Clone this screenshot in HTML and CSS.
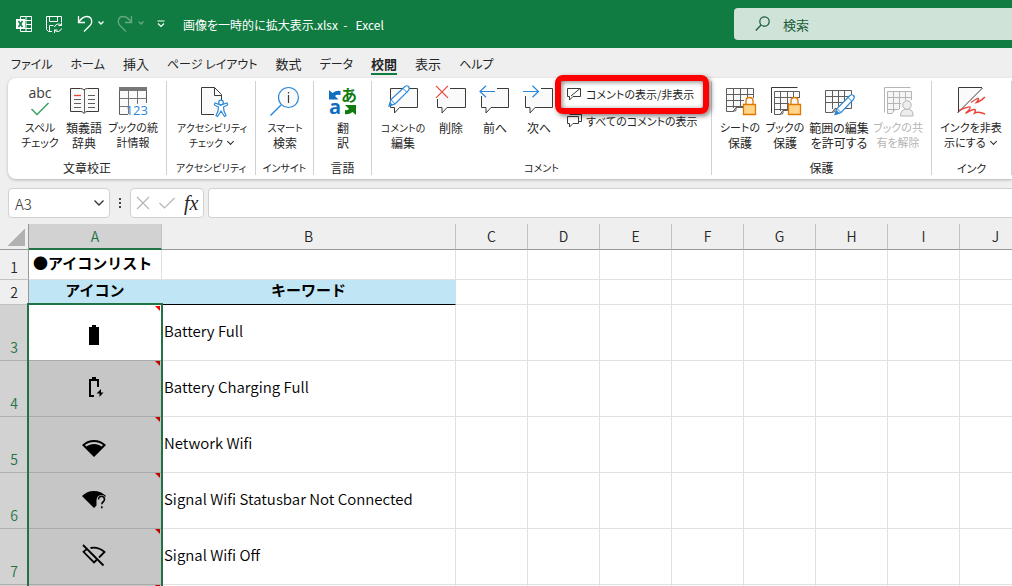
FILE: index.html
```html
<!DOCTYPE html>
<html lang="ja">
<head>
<meta charset="utf-8">
<title>画像を一時的に拡大表示.xlsx - Excel</title>
<link rel="stylesheet" href="styles.css">
</head>
<body>
<div class="app">
<header class="titlebar">
  <div class="quick">
    <svg class="q-logo" width="16" height="16" viewBox="0 0 16 16" fill="none" stroke="#fff"><path d="M4.500 3V.5h11v15h-11V13M10 .5v15M5 4.500h10M10 8.500h5M5 12.500h10"/><path d="M0 3h9v10H0z" fill="#fff" stroke="none"/><path d="M2.500 5l4 6M6.500 5l-4 6" stroke="#107c41" stroke-width="1.500"/></svg>
    <button class="q-btn" aria-label="保存"><svg width="17" height="17" viewBox="0 0 17 17" fill="none" stroke="#fff"><path d="M15.500 6V.5H.5v13l2 2H6M3.500 .5v5h8v-5M3.500 15V9.500h4"/><path d="M8.500 11a4 4 0 0 1 7-1.500M15.500 6.500v3h-3M15.500 12.500a4 4 0 0 1-7 1.500M8.500 17v-3h3"/></svg></button>
    <button class="q-btn q-wide" aria-label="元に戻す"><svg width="28" height="18" viewBox="0 0 28 18" fill="none" stroke="#fff" stroke-width="1.300"><path d="M1.500 1v6.500H8M1.500 7.500C4 3.500 7 1.500 10 1.500c5 0 6 6 3 9L7 16.500"/><path d="M21.500 6.500l2.500 2.500 2.500-2.500"/></svg></button>
    <button class="q-btn q-wide q-off" aria-label="やり直し"><svg width="28" height="18" viewBox="0 0 28 18" fill="none" stroke="#fff" stroke-width="1.300"><path d="M14.500 1v6.500H8M14.500 7.500C12 3.500 9 1.500 6 1.500c-5 0-6 6-3 9l6 6"/><path d="M21.500 6.500l2.500 2.500 2.500-2.500"/></svg></button>
    <button class="q-btn" aria-label="クイック アクセス ツール バーのユーザー設定"><svg width="8" height="8" viewBox="0 0 8 8" fill="none" stroke="#fff" stroke-width="1.200"><path d="M.5 1h7M1 3.500l3 3 3-3"/></svg></button>
  </div>
  <h1 class="doc">画像を一時的に拡大表示.xlsx &nbsp;-&nbsp;&nbsp; Excel</h1>
  <label class="search"><svg width="16" height="16" viewBox="0 0 16 16" fill="none" stroke="#185c37" stroke-width="1.200"><circle cx="9.500" cy="5.500" r="4.700"/><path d="M6 9L.8 14.500"/></svg><input type="search" placeholder="検索" aria-label="検索"></label>
</header>

<nav class="tabs">
  <a href="#file" class="kana">ファイル</a><a href="#home" class="kana">ホーム</a><a href="#insert">挿入</a><a href="#layout" class="kana">ページ レイアウト</a><a href="#formulas">数式</a><a href="#data" class="kana">データ</a><a href="#review" class="active">校閲</a><a href="#view">表示</a><a href="#help" class="kana">ヘルプ</a>
</nav>

<div class="ribbon">
  <section class="group g-proof">
    <div class="tools">
      <button class="tool w36 kana"><svg width="32" height="32" viewBox="0 0 32 32"><text x="16" y="13" text-anchor="middle" class="abc">abc</text><path d="M7.500 24l5.500 5.500L24.500 18" fill="none" stroke="#35a164" stroke-width="1.500"/></svg><span>スペル<br>チェック</span></button>
      <button class="tool w44"><svg width="32" height="32" viewBox="0 0 32 32" fill="#fafafa" stroke="#3b3a39"><path d="M2.500 3.500h10q2.500 0 3.500 1.500 1-1.500 3.500-1.500h11v23H19q-2 0-3 2-1-2-3-2H2.500z"/><path d="M16.500 5v22M6 14.500h7M6 18.500h7M6 22.500h7M20 10.500h7M20 14.500h7M20 18.500h7M20 22.500h7" stroke="#605e5c"/><path d="M6 10.500h7" stroke="#e8443a" stroke-width="1.300"/></svg><span>類義語<br>辞典</span></button>
      <button class="tool w46 kana"><svg width="32" height="32" viewBox="0 0 32 32" fill="none" stroke="#605e5c"><path d="M2.500 3h27v17h-17v10h-10z" fill="#fafafa" stroke="none"/><path d="M11.500 6v23M20.500 6v13M3 13.500h26M3 21.500h9" stroke="#797775"/><path d="M29.500 18V2.500h-27v27H11"/><path d="M2 2h28v4H2z" fill="#797775" stroke="none"/><text x="31" y="30" text-anchor="end" class="n123">123</text></svg><span>ブックの統<br>計情報</span></button>
    </div>
    <h2>文章校正</h2>
  </section>
  <section class="group g-access">
    <div class="tools">
      <button class="tool w76 tight"><svg width="32" height="32" viewBox="0 0 32 32" fill="none" stroke="#3b3a39"><path d="M18 29.500H5.500v-27h13l7 7V15" fill="#fafafa"/><path d="M18.500 2.500v8h7"/><g stroke="#2b88d8" fill="#fff" stroke-width="1.200"><path d="M24.500 20l-5.500-2q-1.500 2 .5 2.500l3 1.500-.5 4-2 4.500 1.500 1 3.500-5.500 3.500 5.500 1.500-1-2-4.500-.5-4 3-1.500q2-.5.5-2.500z"/><circle cx="25" cy="17.500" r="2.300"/></g></svg><span>アクセシビリティ<br>チェック <i class="chev"></i></span></button>
    </div>
    <h2 class="tight">アクセシビリティ</h2>
  </section>
  <section class="group g-small">
    <div class="tools">
      <button class="tool w44 tight"><svg width="32" height="32" viewBox="0 0 32 32" fill="none"><path d="M1.500 30.500L12 20" stroke="#2b88d8" stroke-width="1.500"/><circle cx="19.500" cy="12.500" r="10" fill="#fafafa" stroke="#2b88d8" stroke-width="1.200"/><path d="M19.500 10v8M19.500 7v1.500" stroke="#3b3a39" stroke-width="1.200"/></svg><span>スマート<br><b>検索</b></span></button>
    </div>
    <h2 class="tight">インサイト</h2>
  </section>
  <section class="group g-small">
    <div class="tools">
      <button class="tool w44"><svg width="32" height="32" viewBox="0 0 32 32"><text x="2" y="29" class="tr-a">a</text><text x="14" y="16" class="tr-ja">あ</text><path d="M2 5l3.500 3q4-3 8-2v4q-4-1-5.500 1l3.500 3.500H2z" fill="#106ebe"/><path d="M18 20h11v10l-3.500-3q-4 3-7.500 2v-4q3 .5 4-1z" fill="#107c10"/></svg><span>翻<br>訳</span></button>
    </div>
    <h2>言語</h2>
  </section>
  <section class="group g-comment">
    <div class="tools">
      <button class="tool w48 tight"><svg width="32" height="32" viewBox="0 0 32 32" fill="none" stroke="#3b3a39"><path d="M3.500 3.500h27v19h-18L7.500 28v-5.500h-4z" fill="#fafafa"/><path d="M2 21l2-6.500L18 1.500q2-1.500 3.500 0t0 4L8 19z" fill="#fff" stroke="#2b88d8" stroke-width="1.200"/><path d="M4 14.500L8 19M16 3.500l4 4" stroke="#2b88d8"/><path d="M2 21l1-4 3 3z" fill="#2b88d8" stroke="none"/></svg><span>コメントの<br><b>編集</b></span></button>
      <button class="tool w40"><svg width="32" height="32" viewBox="0 0 32 32" fill="none" stroke="#3b3a39"><path d="M15 3.500h15.500v19H12L7 28v-5.500H2.500V14" fill="#fafafa"/><path d="M1 .8l12 12M13 .8l-12 12" stroke="#e8443a" stroke-width="1.200"/></svg><span>削除</span></button>
      <button class="tool w40"><svg width="32" height="32" viewBox="0 0 32 32" fill="none" stroke="#3b3a39"><path d="M18 3.500h11.500v19H12L7 28v-5.500H2.500V11" fill="#fafafa"/><path d="M16 6.500H1M7 .8L1 6.500l6 5.700" stroke="#2b88d8" stroke-width="1.200"/></svg><span>前へ</span></button>
      <button class="tool w40"><svg width="32" height="32" viewBox="0 0 32 32" fill="none" stroke="#3b3a39"><path d="M18 3.500h11.500v19H12L7 28v-5.500H2.500V11" fill="#fafafa"/><path d="M0 6.500h15.500M9.500 .8l6 5.700-6 5.700" stroke="#2b88d8" stroke-width="1.200"/></svg><span>次へ</span></button>
      <div class="rows">
        <button class="row marked"><svg width="15" height="14" viewBox="0 0 15 14" fill="none" stroke="#3b3a39"><path d="M.5 1.500h13v8H6L2.500 13V9.500h-2zM4 9l9-7.500"/></svg><span>コメントの表示/非表示</span></button>
        <button class="row"><svg width="15" height="14" viewBox="0 0 15 14" fill="none" stroke="#3b3a39"><path d="M2.500 .5h12v7M.5 2.500h11v7H6L2.500 13V9.500h-2zM14.500 7.500h-3"/></svg><span>すべてのコメントの表示</span></button>
      </div>
    </div>
    <h2 class="tight">コメント</h2>
  </section>
  <section class="group g-protect">
    <div class="tools">
      <button class="tool w42 kana"><svg width="32" height="32" viewBox="0 0 32 32" fill="none" stroke="#605e5c"><path d="M19 22.500h-7l-3 4H2.500v-23h27V13" fill="#fafafa"/><path d="M9.500 4v19M16.500 4v18M23.500 4v8M3 9.500h26M3 15.500h17M3 21.500h16M12 22.500v3l-3 1"/><path d="M22 20v-4q0-3.500 3.500-3.500T29 16v4" stroke="#e07800" stroke-width="1.300"/><path d="M19.500 19.500h12v10h-12z" fill="#ffd58a" stroke="#e07800" stroke-width="1.300"/></svg><span>シートの<br><b>保護</b></span></button>
      <button class="tool w40 kana"><svg width="32" height="32" viewBox="0 0 32 32" fill="none" stroke="#605e5c"><path d="M2.500 28V2.500h26" stroke="#3b3a39"/><path d="M19 25.500h-5l-3 4H5.500v-23h25V13" fill="#fafafa"/><path d="M11.500 6v20M18.500 6v18M24.500 6v7M6 12.500h24M6 18.500h14M6 24.500h13M14 25.500v3l-3 1"/><path d="M22 20v-4q0-3.500 3.500-3.500T29 16v4" stroke="#e07800" stroke-width="1.300"/><path d="M19.500 19.500h12v10h-12z" fill="#ffd58a" stroke="#e07800" stroke-width="1.300"/></svg><span>ブックの<br><b>保護</b></span></button>
      <button class="tool w60"><svg width="32" height="32" viewBox="0 0 32 32" fill="none" stroke="#605e5c"><path d="M2.500 5.500h26v18H12l-3 4H2.500z" fill="#fafafa"/><path d="M9.500 6v18M15.500 6v17M21.500 6v17M3 11.500h25M3 17.500h25M12 23.500v3l-3 1"/><path d="M12 29.500l2-6L27 10.500q2-1.500 3.500 0t0 4L18 27.500z" fill="#fff" stroke="#2b88d8" stroke-width="1.200"/><path d="M14 23.500l4 4M25 12.500l4 4" stroke="#2b88d8"/><path d="M12 30l1.500-5 3.500 3.500z" fill="#2b88d8" stroke="none"/></svg><span>範囲の編集<br>を許可する</span></button>
      <button class="tool w50 kana" disabled><svg width="32" height="32" viewBox="0 0 32 32" fill="none" stroke="#b5b5b5"><path d="M2.500 27.500v-25h26"/><path d="M17 24.500h-4l-3 4H5.500v-22h24V15" fill="#f5f5f5"/><path d="M11.500 6v20M17.500 6v18M23.500 6v9M6 12.500h23M6 18.500h13M6 24.500h11"/><g fill="#eee"><path d="M18.500 31q0-7 6.500-7t6 7z"/><circle cx="25" cy="20" r="4.200"/></g></svg><span>ブックの共<br>有を解除</span></button>
    </div>
    <h2>保護</h2>
  </section>
  <section class="group g-ink">
    <div class="tools">
      <button class="tool w64 kana"><svg width="32" height="32" viewBox="0 0 32 32" fill="none"><path d="M3.500 2.500h24l-24 24z" fill="#fafafa" stroke="none"/><path d="M3.500 27V2.500H27M2.500 28L27.500 3" stroke="#3b3a39"/><path d="M16 17.500q7-5 7.500-4t-2 4q4-1 8.500-5.500M4 25.500q10-4.500 11-3.500t-4.500 6.500q6-4 8.500-4t.5 3.500q4-2 10.500 1" stroke="#e8443a" stroke-width="1.400"/></svg><span>インクを非表<br>示にする <i class="chev"></i></span></button>
    </div>
    <h2 class="kana">インク</h2>
  </section>
</div>

<div class="formula">
  <label class="namebox"><input value="A3" aria-label="名前ボックス"><svg width="12" height="8" viewBox="0 0 12 8" fill="none" stroke="#333" stroke-width="1.300"><path d="M1.500 1.500L6 6l4.500-4.500"/></svg></label>
  <i class="dots"></i>
  <div class="fx">
    <button aria-label="キャンセル"><svg width="14" height="14" viewBox="0 0 14 14" fill="none" stroke="#b5b5b5" stroke-width="1.200"><path d="M1 1l12 12M13 1L1 13"/></svg></button>
    <button aria-label="入力"><svg width="16" height="14" viewBox="0 0 16 14" fill="none" stroke="#b5b5b5" stroke-width="1.200"><path d="M.5 7l5 5L15.500 2"/></svg></button>
    <button class="fn">fx</button>
  </div>
  <input class="entry" aria-label="数式バー">
</div>

<main class="sheet">
<table>
  <colgroup><col class="c-head"><col class="c-a"><col class="c-b"><col class="c-n" span="8"></colgroup>
  <thead><tr><th class="corner"></th><th class="on">A</th><th>B</th><th>C</th><th>D</th><th>E</th><th>F</th><th>G</th><th>H</th><th>I</th><th>J</th></tr></thead>
  <tbody>
    <tr class="r1"><th>1</th><td class="title">●アイコンリスト</td><td></td><td></td><td></td><td></td><td></td><td></td><td></td><td></td><td></td></tr>
    <tr class="r2"><th>2</th><td class="blue">アイコン</td><td class="blue line">キーワード</td><td></td><td></td><td></td><td></td><td></td><td></td><td></td><td></td></tr>
    <tr class="item"><th>3</th><td class="pic first"><div class="range"></div><svg class="icon" viewBox="0 0 24 24"><path d="M17 4h-3V2h-4v2H7v18h10z"/></svg></td><td>Battery Full</td><td></td><td></td><td></td><td></td><td></td><td></td><td></td><td></td></tr>
    <tr class="item"><th>4</th><td class="pic"><svg class="icon" viewBox="0 0 24 24"><path d="M7 4h3V2h4v2h3v8h-2V6H9v14h3v2H7zM19 14l-4.500 4.500h3v3.500l4-4.500h-2.500z"/></svg></td><td>Battery Charging Full</td><td></td><td></td><td></td><td></td><td></td><td></td><td></td><td></td></tr>
    <tr class="item"><th>5</th><td class="pic low"><svg class="icon" viewBox="0 0 24 24"><path fill-rule="evenodd" d="M12 4C7.310 4 3.070 5.900 0 8.980L12 21 24 8.980C20.930 5.900 16.690 4 12 4zM2.920 9.070C5.510 7.080 8.670 6 12 6s6.490 1.080 9.080 3.070l-1.430 1.430C17.500 8.940 14.860 8 12 8s-5.500.94-7.650 2.510z"/></svg></td><td>Network Wifi</td><td></td><td></td><td></td><td></td><td></td><td></td><td></td><td></td></tr>
    <tr class="item"><th>6</th><td class="pic"><svg class="icon" viewBox="0 0 24 24"><path d="M24 8.980C20.930 5.900 16.690 4 12 4S3.070 5.900 0 8.980L12 21l2.500-2.500V13q.5-5 5.500-5 2 0 3 2z"/><path d="M16.500 12.500a3 3 0 1 1 5 2q-1.700 1.300-1.700 2.800M19.800 19.300v2" fill="none" stroke="#000" stroke-width="1.600"/></svg></td><td>Signal Wifi Statusbar Not Connected</td><td></td><td></td><td></td><td></td><td></td><td></td><td></td><td></td></tr>
    <tr class="item"><th>7</th><td class="pic"><svg class="icon" viewBox="0 0 24 24" fill="none" stroke="#000" stroke-width="1.800"><path d="M8.500 5Q16 3.500 22.500 9l-5.500 5.500M5 6.200Q3 7.200 1.500 8.800L12 19.500l2.500-2.500M1 2l20.500 20.500"/></svg></td><td>Signal Wifi Off</td><td></td><td></td><td></td><td></td><td></td><td></td><td></td><td></td></tr>
    <tr class="item"><th></th><td class="pic"></td><td></td><td></td><td></td><td></td><td></td><td></td><td></td><td></td><td></td></tr>
  </tbody>
</table>
</main>
</div>
</body>
</html>
```

FILE: styles.css
```css
* { box-sizing: border-box; }
body {
  margin: 0;
  background: #efefef;
  color: #262626;
  font-family: "Noto Sans CJK JP", "Noto Sans", sans-serif;
  font-size: 12px;
  font-feature-settings: "palt";
}
button, input { font: inherit; color: inherit; font-feature-settings: inherit; }
button { border: 0; padding: 0; background: none; }
svg { display: block; flex: none; overflow: visible; }
h1, h2 { margin: 0; font-weight: 400; font-size: 12px; }
.app { height: 100vh; overflow: hidden; display: flex; flex-direction: column; }

.titlebar { flex: none; height: 48px; background: #107c41; color: #fff; display: flex; align-items: center; }
.quick { display: flex; align-items: center; padding-left: 16px; gap: 14px; width: 183px; flex: none; }
.q-btn { height: 24px; display: flex; align-items: center; }
.q-wide { width: 26px; }
.q-off { opacity: .35; }
.doc { white-space: nowrap; flex: 1; }
.search {
  width: 278px; height: 32px; flex: none; padding-left: 21px;
  display: flex; align-items: center; gap: 12px;
  background: #cfe3d8; border-radius: 4px 0 0 4px; color: #185c37;
}
.search input { border: 0; background: none; outline: 0; width: 180px; padding: 0; font-size: 13px; }
.search input::placeholder { color: #185c37; opacity: 1; }

.tabs { flex: none; height: 30px; display: flex; gap: 18px; padding: 6px 11px 0; font-size: 13px; line-height: 19px; }
.tabs a { color: #262626; text-decoration: none; white-space: nowrap; height: 21px; }
.tabs .kana { font-size: 12px; }
.tabs .active { font-weight: 700; border-bottom: 2px solid #107c41; }

.ribbon {
  flex: none; margin-left: 8px; height: 101px; display: flex;
  background: #fff; border-radius: 8px 0 0 8px; box-shadow: 0 1px 3px rgba(0, 0, 0, .25);
}
.group { flex: none; display: flex; flex-direction: column; padding-top: 7px; border-right: 1px solid #d1d1d1; border-image: linear-gradient(transparent 4px, #d1d1d1 4px, #d1d1d1 96px, transparent 96px) 1; }
.group h2 { text-align: center; line-height: 16px; margin-top: 5px; white-space: nowrap; }
.tools { display: flex; gap: 4px; height: 70px; padding-left: 7px; }
.g-proof { width: 159px; }
.g-proof .tools { padding-left: 14px; }
.g-access { width: 89px; }
.g-small { width: 58px; }
.g-comment { width: 340px; }
.g-protect { width: 220px; }
.g-ink { width: 80px; }
.tool { display: flex; flex-direction: column; align-items: center; gap: 3px; line-height: 15px; white-space: nowrap; }
.tool b { font-weight: 400; font-size: 12px; }
.tool.kana, .group h2.kana { font-size: 11px; }
.tool.tight, .group h2.tight { font-size: 10px; }
.tool:disabled { color: #b5b5b5; }
.w36 { width: 36px; } .w40 { width: 40px; } .w42 { width: 42px; } .w44 { width: 44px; } .w46 { width: 46px; }
.w48 { width: 48px; } .w50 { width: 50px; } .w60 { width: 60px; } .w64 { width: 64px; } .w76 { width: 76px; }
.chev { display: inline-block; width: 5px; height: 5px; margin: 0 2px 3px 3px; border: solid #262626; border-width: 0 1px 1px 0; transform: rotate(45deg); }
.abc { font: 14px "Open Sans", sans-serif; fill: #3b3a39; }
.n123 { font: 13px "Open Sans", sans-serif; fill: #2b88d8; stroke: none; }
.tr-a { font: 700 20px "Open Sans", sans-serif; fill: #106ebe; }
.tr-ja { font: 700 16px "Noto Sans CJK JP", sans-serif; fill: #107c10; }
.rows { display: flex; flex-direction: column; align-items: flex-start; gap: 5px; font-size: 11px; }
.row { position: relative; height: 26px; display: flex; align-items: center; gap: 4px; padding: 0 4px; white-space: nowrap; }
.row.marked { height: 18px; z-index: 2; }
.row.marked::after {
  content: ""; position: absolute; inset: -10px -11px -11px -8px;
  border: 6px solid #fe0000; border-radius: 8px;
  box-shadow: 2px 2px 5px rgba(0, 0, 0, .5), inset 1px 1px 5px rgba(0, 0, 0, .5);
}

.formula { flex: none; display: flex; align-items: center; padding: 9px 0 6px 8px; }
.namebox, .fx, .entry { height: 30px; background: #fff; border: 1px solid #d1d1d1; border-radius: 4px; }
.namebox { width: 102px; display: flex; align-items: center; padding: 0 4px 0 6px; }
.namebox input { border: 0; outline: 0; padding: 0; flex: 1; min-width: 0; font-size: 15px; font-weight: 300; }
.dots { width: 2px; height: 10px; margin: 0 9px; background: repeating-linear-gradient(#444 0 2px, transparent 2px 4px); }
.fx { width: 74px; display: flex; align-items: center; gap: 9px; padding-left: 5px; }
.fn { font: italic 20px/20px "Liberation Serif", serif; }
.entry { flex: 1; min-width: 0; margin-left: 4px; border-right: 0; border-radius: 4px 0 0 4px; outline: 0; }

.sheet { flex: 1; min-height: 0; overflow: hidden; }
table { table-layout: fixed; width: 1032px; border-collapse: separate; border-spacing: 0; font-size: 15px; font-feature-settings: normal; }
.c-head { width: 29px; } .c-a { width: 133px; } .c-b { width: 294px; } .c-n { width: 72px; }
th { padding: 0; font-weight: 350; background: #efefef; line-height: 20px; font-size: 14px; }
thead th { height: 26px; padding-bottom: 2px; border-right: 1px solid #c2c2c2; border-bottom: 1px solid #999; }
thead .corner { background: linear-gradient(135deg, transparent 50%, #b1b1b1 50%) 8px 5px / 17px 17px no-repeat, #efefef; border-right-color: #999; }
thead .on { background: #d2d2d2; color: #217346; border-bottom: 2px solid #217346; padding-bottom: 0; }
tbody th { border-right: 1px solid #999; border-bottom: 1px solid #c2c2c2; vertical-align: bottom; padding-bottom: 2px; }
td { padding: 0 2px 4px; background: #fff; border-right: 1px solid #e1e1e1; border-bottom: 1px solid #e1e1e1; color: #000; white-space: nowrap; line-height: 20px; font-weight: 350; }
.r1 > * { height: 30px; }
.r2 > * { height: 25px; }
.title { font-weight: 700; padding-left: 4px; }
td.blue { background: #c0e6f5; font-weight: 700; text-align: center; border-color: #c0e6f5; }
td.line { border-bottom-color: #000; }
.item > * { height: 56px; }
.item th { background: #d2d2d2; color: #217346; border-bottom-color: #b0b0b0; padding-bottom: 3px; }
.pic { position: relative; background: #c6c6c6; border-bottom-color: #aaa; padding: 0 4px 3px 2px; }
.pic.first { background: #fff; padding: 4px 4px 0 2px; }
.pic.low { padding-top: 9px; }
.pic::after { content: ""; position: absolute; top: 0; right: 1px; border-top: 5px solid #c00000; border-left: 5px solid transparent; }
.pic.first::after { top: 1px; border-top-color: #f00; }
.icon { width: 24px; height: 24px; margin: 0 auto; }
.range { position: absolute; z-index: 1; top: -2px; left: -2px; right: -2px; height: 400px; border: 2px solid #217346; }
```
